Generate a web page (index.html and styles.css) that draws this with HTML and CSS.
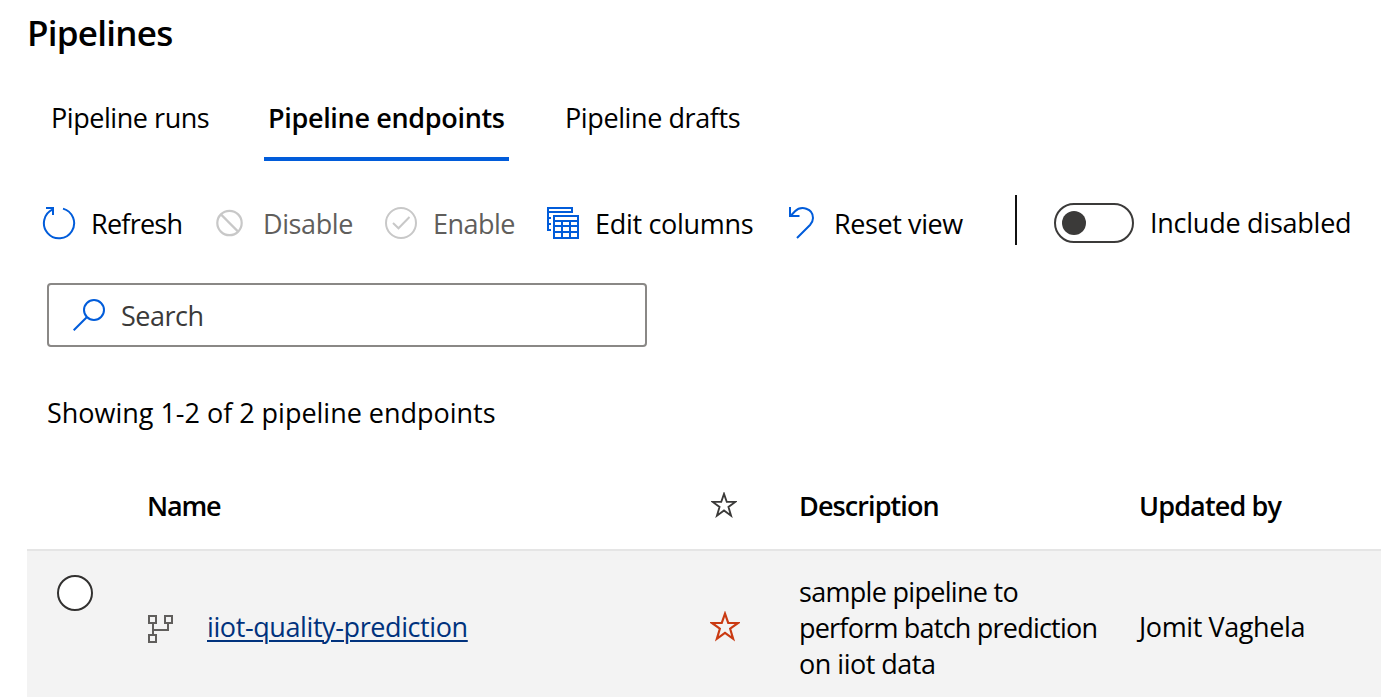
FILE: index.html
```html
<!DOCTYPE html>
<html lang="en">
<head>
<meta charset="utf-8">
<title>Pipelines</title>
<link rel="stylesheet" href="styles.css">
</head>
<body>
<main class="page">
  <h1 class="title">Pipelines</h1>
  <nav class="tabs">
    <a class="tab tab-runs"><span>Pipeline runs</span></a>
    <a class="tab tab-endpoints active"><span>Pipeline endpoints</span></a>
    <a class="tab tab-drafts"><span>Pipeline drafts</span></a>
  </nav>
  <div class="toolbar">
    <button class="command refresh">
      <svg width="34" height="36" viewBox="0 0 34 36" fill="none" stroke="#015cda" stroke-width="2"><path d="M21 3.600A15.100 15.100 0 1 1 10.800 4.400M4 3h7v7"/></svg>
      <span>Refresh</span>
    </button>
    <button class="command disable muted">
      <svg width="28" height="28" viewBox="0 0 28 28" fill="none" stroke="#c8c8c8" stroke-width="2.200"><circle cx="13.500" cy="14" r="12.200"/><path d="M4.900 5.400l17.200 17.200"/></svg>
      <span>Disable</span>
    </button>
    <button class="command enable muted">
      <svg width="32" height="32" viewBox="0 0 32 32" fill="none" stroke="#c8c8c8" stroke-width="2"><circle cx="16" cy="16" r="15"/><path d="M8 16l5.500 5.300L24.500 10"/></svg>
      <span>Enable</span>
    </button>
    <button class="command columns">
      <svg width="32" height="32" viewBox="0 0 32 32" fill="none" stroke="#015cda" stroke-width="2"><path d="M25 6V1H1v22h3M1 5h24M1 11h3M1 17h3M7 9h24v22H7zM7 14h24M7 19h24M7 25h24M15 14v17M23 14v17"/></svg>
      <span>Edit columns</span>
    </button>
    <button class="command reset">
      <svg width="26" height="32" viewBox="0 0 26 32" fill="none" stroke="#015cda" stroke-width="2"><path d="M2 0v9h9.500M2.500 9L7 4.300C13-1.500 25 1 25 11c0 3-1.200 5-3 7L9 31"/></svg>
      <span>Reset view</span>
    </button>
    <div class="divider"></div>
    <label class="toggle-field">
      <span class="toggle"><span class="knob"></span></span>
      <span class="toggle-text">Include disabled</span>
    </label>
  </div>
  <div class="search">
    <svg width="32" height="32" viewBox="0 0 32 32" fill="none" stroke="#015cda" stroke-width="2"><circle cx="21" cy="11" r="10"/><path d="M14 18L.7 31.300"/></svg>
    <span>Search</span>
  </div>
  <p class="summary">Showing 1-2 of 2 pipeline endpoints</p>
  <div class="grid header">
    <span class="name-title">Name</span>
    <svg class="star" width="26" height="26" viewBox="1 1 28 28" fill="none" stroke="#3b3a39" stroke-width="2"><path d="M15 3l3 8.700h9.200l-7.400 5.400 2.800 9.400-7.600-5.600-7.600 5.600 2.800-9.400-7.400-5.400H12z"/></svg>
    <span class="description-title">Description</span>
    <span class="updated-title">Updated by</span>
  </div>
  <div class="grid row">
    <span class="radio"></span>
    <div class="name-cell">
      <svg width="26" height="28" viewBox="0 0 26 28" fill="none" stroke="#605e5c" stroke-width="2"><path d="M2 1h7v7H2zM18 1h7v7h-7zM2 20h7v7H2zM6 8v12M6 15h15V8"/></svg>
      <a class="link">iiot-quality-prediction</a>
    </div>
    <svg class="star" width="30" height="31" viewBox="1 1 28 28" fill="none" stroke="#ca3a12" stroke-width="2"><path d="M15 3l3 8.700h9.200l-7.400 5.400 2.800 9.400-7.600-5.600-7.600 5.600 2.800-9.400-7.400-5.400H12z"/></svg>
    <div class="description"><span class="d1">sample pipeline to</span><br><span class="d2">perform batch prediction</span><br><span class="d3">on iiot data</span></div>
    <span class="updated">Jomit Vaghela</span>
  </div>
</main>
</body>
</html>
```
FILE: styles.css
```css
* { box-sizing: border-box; }
body {
  margin: 0;
  background: #fff;
  color: #000;
  font: 27px/36px "Open Sans", "Noto Sans", sans-serif;
  letter-spacing: -0.4px;
  overflow: hidden;
}
svg { display: block; flex: none; }
.page { height: 697px; overflow: hidden; white-space: nowrap; }
.title {
  margin: 0;
  padding: 8px 0 0 27px;
  height: 100px;
  font-size: 35px;
  line-height: 50px;
  font-weight: 600;
  letter-spacing: -0.75px;
}
.tabs { display: flex; height: 61px; padding-left: 51px; }
.tab { height: 61px; }
.tab-runs { width: 213px; letter-spacing: -0.45px; }
.tab-endpoints { width: 245px; margin-right: 56px; padding-left: 4px; letter-spacing: -0.33px; }
.tab.active { font-weight: 600; border-bottom: 4px solid #015cda; }
.toolbar { display: flex; align-items: center; height: 86px; padding: 0 0 0 42px; margin-top: 20px; }
.command {
  display: flex;
  align-items: center;
  border: 0;
  padding: 0;
  background: none;
  color: inherit;
  font: inherit;
  letter-spacing: inherit;
  height: 36px;
}
.command svg { position: relative; top: -1px; }
.refresh { width: 174px; gap: 15px; letter-spacing: -0.75px; }
.disable { width: 169px; gap: 19px; }
.enable { width: 162px; gap: 16px; letter-spacing: -0.55px; }
.columns { width: 241px; gap: 16px; letter-spacing: -0.3px; }
.reset { width: 227px; gap: 20px; }
.muted { color: #605e5c; }
.divider { width: 2px; height: 50px; background: #111; margin: -8px 37px 0 0; }
.toggle-field { display: flex; align-items: center; gap: 16px; margin-top: -10px; }
.toggle-field { margin-top: -2px; letter-spacing: -0.25px; }
.toggle {
  width: 80px;
  height: 40px;
  border: 2px solid #3b3a39;
  border-radius: 20px;
  padding: 6px;
}
.knob { display: block; width: 24px; height: 24px; border-radius: 50%; background: #3b3a39; }
.search {
  display: flex;
  align-items: center;
  gap: 16px;
  width: 600px;
  height: 64px;
  margin: 16px 0 0 47px;
  padding-left: 24px;
  border: 2px solid #8a8886;
  border-radius: 4px;
  color: #3b3a39;
  letter-spacing: -0.5px;
}
.search span { padding-top: 2px; }
.summary { margin: 46px 0 0 47px; padding-top: 2px; letter-spacing: -0.02px; }
.grid {
  display: grid;
  grid-template-columns: 120px 563px 89px 340px 1fr;
  margin-left: 27px;
  align-items: center;
}
.header { height: 120px; border-bottom: 2px solid #e5e5e5; font-weight: 600; padding-top: 32px; }
.header .star { margin: -2px 0 0 1px; }
.name-title { grid-column: 2; letter-spacing: -1.2px; }
.description-title { letter-spacing: -0.9px; }
.updated-title { letter-spacing: -0.85px; }
.row { height: 146px; background: #f3f3f3; padding: 23px 0 15px; }
.row .star { margin-top: -4px; }
.radio {
  width: 36px;
  height: 36px;
  margin: 1px 0 0 30px;
  border: 2px solid #323130;
  border-radius: 50%;
  background: #fff;
  align-self: start;
}
.name-cell { display: flex; align-items: center; gap: 34px; }
.name-cell svg { margin-top: 1px; }
.link {
  margin-top: -3px;
  color: #00327d;
  text-decoration: underline;
  text-decoration-thickness: 2px;
  text-underline-offset: 3px;
}
.description .d1 { letter-spacing: -0.7px; }
.description .d2 { letter-spacing: -0.78px; }
.description .d3 { letter-spacing: -0.5px; }
.updated { margin-top: -3px; }
```
